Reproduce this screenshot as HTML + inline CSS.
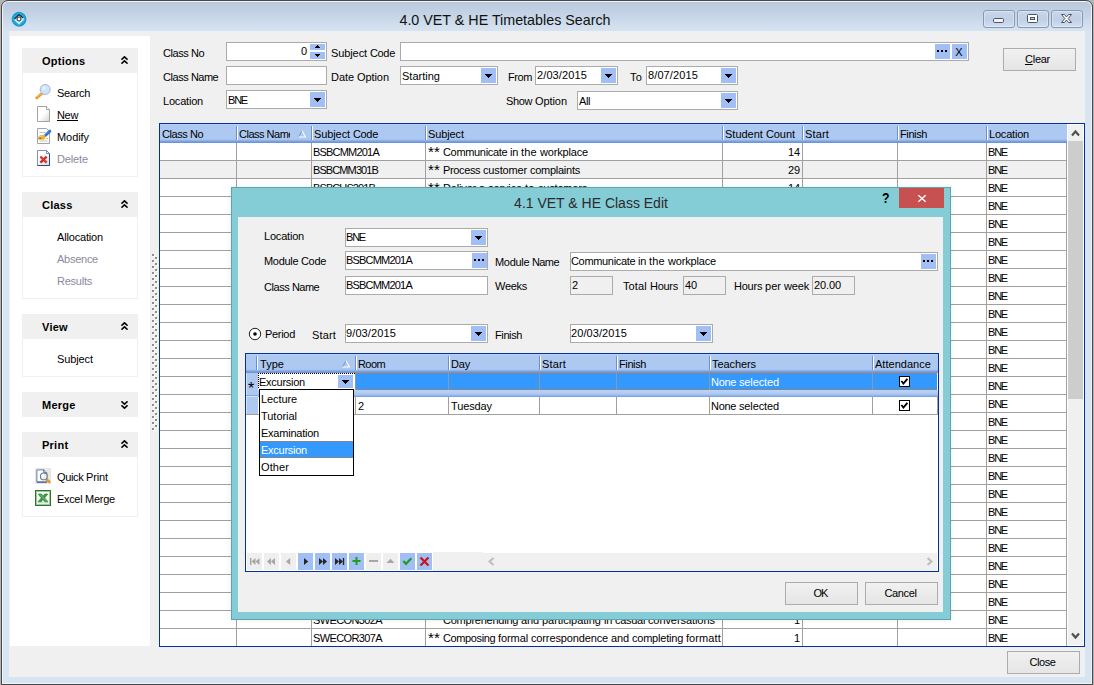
<!DOCTYPE html><html><head><meta charset="utf-8"><title>4.0 VET &amp; HE Timetables Search</title><style>
*{box-sizing:border-box;margin:0;padding:0}
html,body{width:1094px;height:685px;overflow:hidden;background:#b4b4b4}
body{font-family:"Liberation Sans",sans-serif;font-size:11px;letter-spacing:-0.2px;color:#000;position:relative}
.a{position:absolute}
.t{position:absolute;white-space:nowrap;line-height:13px;height:13px}
.g{color:#8a8a9c}
u{text-decoration:underline;text-underline-offset:1px}
#win{left:1px;top:0;width:1092px;height:685px;border:1px solid #474747;border-radius:7px 7px 0 0;background:linear-gradient(#b8c7da 0,#c3d2e4 12px,#d2e0ef 26px,#d7e4f2 31px,#d7e4f2 100%);box-shadow:inset 0 0 0 1px #eef4fb}
#client{left:9px;top:31px;width:1076px;height:646px;background:#f0f0f0}
#title{left:0;top:10px;width:1010px;text-align:center;font-size:14.3px;line-height:20px;height:20px;letter-spacing:0;color:#111}
.wb{position:absolute;top:10px;width:32px;height:18px;border:1px solid #8798b6;border-radius:3px;background:linear-gradient(#c9d7e9,#bfd0e5 50%,#d0deef);box-shadow:inset 0 0 0 1px rgba(255,255,255,.35)}
#lp{left:10px;top:36px;width:140px;height:610px;background:#fff}
.gh{position:absolute;left:22px;width:116px;height:25px;background:#f0f0f0}
.gh b{position:absolute;left:20px;top:7px;line-height:13px;letter-spacing:.25px;white-space:nowrap}
.gh svg{position:absolute;left:99px;top:8px}
.gb{position:absolute;left:22px;width:116px;border:1px solid #f0f0f0;border-top:none}
.inp{position:absolute;background:#fff;border:1px solid #ababab;height:19px}
.inp.ro{background:#f0f0f0}
.inp>span{position:absolute;left:2px;top:2px;line-height:13px;white-space:nowrap}
.dd{position:absolute;right:1px;top:1px;width:15px;height:15px;background:#a1bff4}
.dd:after{content:"";position:absolute;left:7px;top:6px;width:1px;height:1px;background:#000;box-shadow:-3px 0 #000,-2px 0 #000,-1px 0 #000,0 0 #000,1px 0 #000,2px 0 #000,3px 0 #000,-2px 1px #000,-1px 1px #000,0 1px #000,1px 1px #000,2px 1px #000,-1px 2px #000,0 2px #000,1px 2px #000,0 3px #000}
.el{position:absolute;top:1px;width:15px;height:15px;background:#a1bff4}
.el i{position:absolute;top:6px;width:2px;height:2px;background:#000}
.btn{position:absolute;height:23px;width:73px;padding-right:2px;border:1px solid #acacac;background:linear-gradient(#f1f1f1,#e5e5e5);text-align:center;line-height:21px}
#grid{left:159px;top:123px;width:926px;height:524px;border:1px solid #04309a;background:#fff}
.hl{position:absolute;left:160px;width:907px;height:1px;background:#a0a0a0}
.vl{position:absolute;top:143px;width:1px;height:503px;background:#a0a0a0}
.hc{position:absolute;height:19px;background:linear-gradient(#bad2f5 0,#bad2f5 1px,#adc9f1 1px,#adc9f1 15px,#9ebdec 16px,#86a9e3 17px,#6d96d8 18px,#6d96d8 19px)}
.hs{position:absolute;width:2px;background:linear-gradient(90deg,#6a8ed2 0,#6a8ed2 1px,#fff 1px,#fff 2px)}
#dlg{left:231px;top:187px;width:720px;height:433px;background:#84ccd6;border:1px solid #5fa3ad;box-shadow:0 0 5px rgba(0,0,0,.09)}
#dlgc{left:238px;top:217px;width:705px;height:395px;background:#f0f0f0}
#dtitle{left:231px;top:193px;width:720px;text-align:center;font-size:14px;line-height:20px;height:20px;letter-spacing:0;color:#2b2b2b}
#ig{left:245px;top:353px;width:694px;height:219px;border:1px solid #04309a;background:#fff}
.nb{position:absolute;top:553px;width:15px;height:17px}
.nb.on{background:#a1bff4}
.nb.off{background:#efefef}
.li{position:absolute;left:260px;width:94px;height:17px}
.li span{position:absolute;left:1px;top:2px;line-height:13px}
</style></head><body>
<div id="win" class="a"></div>
<div id="title" class="a">4.0 VET &amp; HE Timetables Search</div>
<svg class="a" style="left:11px;top:11px" width="17" height="17" viewBox="0 0 17 17"><circle cx="8.300" cy="8.500" r="6.900" fill="#3a4a58" opacity=".55"/><circle cx="8" cy="8.200" r="6.900" fill="#14a9e0" stroke="#0c8fc8" stroke-width=".8"/><path d="M8 2.600 13.600 8.200 8 13.800 2.400 8.200z" fill="#fff" opacity=".7"/><path d="M3.600 9 8 12.800 12.400 9z" fill="#fff" opacity=".35"/><path d="M3.300 8.200 7.900 3.600 11.900 6.800" fill="none" stroke="#111" stroke-width="1.100"/><circle cx="8" cy="8" r="2" fill="#fff" stroke="#111" stroke-width=".9"/></svg>
<div class="wb" style="left:983px"><svg width="29" height="16" viewBox="0 0 29 16"><rect x="9.500" y="7.500" width="10" height="4" rx="1.200" fill="#f4f4f4" stroke="#4a5468" stroke-width="1"/></svg></div>
<div class="wb" style="left:1017px"><svg width="29" height="16" viewBox="0 0 29 16"><rect x="9.5" y="3.5" width="10" height="8" rx="1" fill="#fff" stroke="#4a5468" stroke-width="1"/><rect x="12.5" y="6.5" width="4" height="2" fill="#c6d5e8" stroke="#4a5468" stroke-width="1"/></svg></div>
<div class="wb" style="left:1051px"><svg width="30" height="16" viewBox="0 0 30 16"><path d="M9.500 3.500h3L14.500 6l2-2.500h3L16.200 7.500l3.300 4h-3L14.500 9l-2 2.500h-3L12.800 7.500z" fill="#fff" stroke="#4a5468" stroke-width="1" stroke-linejoin="round"/></svg></div>
<div id="client" class="a"></div>
<div id="lp" class="a"></div>
<div class="gh" style="top:48px"><b>Options</b><svg width="7" height="8" viewBox="0 0 7 8"><path d="M.4 3.600 3.500 .8 6.600 3.600M.4 7.600 3.500 4.800 6.600 7.600" fill="none" stroke="#000" stroke-width="1.600"/></svg></div>
<div class="gb" style="top:73px;height:104px"></div>
<div class="gh" style="top:192px"><b>Class</b><svg width="7" height="8" viewBox="0 0 7 8"><path d="M.4 3.600 3.500 .8 6.600 3.600M.4 7.600 3.500 4.800 6.600 7.600" fill="none" stroke="#000" stroke-width="1.600"/></svg></div>
<div class="gb" style="top:217px;height:82px"></div>
<div class="gh" style="top:314px"><b>View</b><svg width="7" height="8" viewBox="0 0 7 8"><path d="M.4 3.600 3.500 .8 6.600 3.600M.4 7.600 3.500 4.800 6.600 7.600" fill="none" stroke="#000" stroke-width="1.600"/></svg></div>
<div class="gb" style="top:339px;height:38px"></div>
<div class="gh" style="top:392px"><b>Merge</b><svg style="top:9px" width="7" height="8" viewBox="0 0 7 8"><path d="M.4 .4 3.500 3.200 6.600 .4M.4 4.400 3.500 7.200 6.600 4.400" fill="none" stroke="#000" stroke-width="1.600"/></svg></div>
<div class="gh" style="top:432px"><b>Print</b><svg width="7" height="8" viewBox="0 0 7 8"><path d="M.4 3.600 3.500 .8 6.600 3.600M.4 7.600 3.500 4.800 6.600 7.600" fill="none" stroke="#000" stroke-width="1.600"/></svg></div>
<div class="gb" style="top:457px;height:60px"></div>
<span class="t " style="left:57px;top:87px;letter-spacing:-0.312px;">Search</span>
<span class="t " style="left:57px;top:109px;letter-spacing:-0.333px;"><u>New</u></span>
<span class="t " style="left:57px;top:131px;letter-spacing:-0.068px;">Modify</span>
<span class="t g" style="left:57px;top:153px;letter-spacing:-0.135px;">Delete</span>
<span class="t " style="left:57px;top:231px;letter-spacing:-0.172px;">Allocation</span>
<span class="t g" style="left:57px;top:253px;letter-spacing:-0.263px;">Absence</span>
<span class="t g" style="left:57px;top:275px;letter-spacing:-0.241px;">Results</span>
<span class="t " style="left:57px;top:353px;letter-spacing:-0.103px;">Subject</span>
<span class="t " style="left:57px;top:471px;"><span style="letter-spacing:-0.365px;">Quick </span><span style="letter-spacing:-0.125px;">Print</span></span>
<span class="t " style="left:57px;top:493px;"><span style="letter-spacing:-0.328px;">Excel </span><span style="letter-spacing:-0.237px;">Merge</span></span>
<svg class="a" style="left:35px;top:83px" width="17" height="17" viewBox="0 0 17 17"><path d="M7.200 10.300 1.700 15" stroke="#f0921e" stroke-width="2.600" stroke-linecap="round"/><path d="M7.600 10 1.900 14.600" stroke="#f8b860" stroke-width="1"/><circle cx="10.200" cy="6.500" r="5" fill="#c9e8f5" stroke="#b3abe2" stroke-width="1"/><circle cx="9.200" cy="5.300" r="1.800" fill="#e3f4fb"/></svg>
<svg width="0" height="0" style="position:absolute"><defs><linearGradient id="dg" x1="0" y1="0" x2="1" y2="1"><stop offset=".5" stop-color="#fff"/><stop offset="1" stop-color="#d4d4d4"/></linearGradient></defs></svg>
<svg class="a" style="left:37px;top:106px" width="13" height="16" viewBox="0 0 13 16"><path d="M.5 .5h9l3 3v12h-12z" fill="url(#dg)" stroke="#a3a3a3"/><path d="M9.500 .5v3h3" fill="#fff" stroke="#a3a3a3"/></svg>
<svg class="a" style="left:37px;top:128px" width="15" height="16" viewBox="0 0 15 16"><path d="M.5 .5h9l3 3v12h-12z" fill="#fff" stroke="#a3a3a3"/><path d="M2.500 4.500h6M2.500 7.500h4M9 10.500h2M2.500 13h8" stroke="#c4c4c4" stroke-width="1"/><path d="M12.800 3.200 8.300 7.500" stroke="#2a6fd6" stroke-width="3" stroke-linecap="round"/><path d="M12.400 2.300 7.800 6.700" stroke="#7fb0f0" stroke-width=".8"/><path d="M8.700 8.200 7 6.400 5.200 8.300 1.200 8.500v3.200h5.800l1.200-1.600z" fill="#f7b21a"/><path d="M2.300 10.200h2" stroke="#3a66c4" stroke-width="1.200"/></svg>
<svg class="a" style="left:37px;top:150px" width="13" height="16" viewBox="0 0 13 16"><defs><linearGradient id="dg2" x1="0" y1="0" x2="1" y2="1"><stop offset=".3" stop-color="#fff"/><stop offset="1" stop-color="#d3deee"/></linearGradient></defs><path d="M.5 .5h9l3 3v12h-12z" fill="url(#dg2)" stroke="#7d93ba"/><path d="M.5 15.500h12v-12" fill="none" stroke="#2d4b7e"/><path d="M9.500 .5v3h3z" fill="#fff" stroke="#5a76a6" stroke-width=".8"/><path d="M3.400 6.600 9.600 12.600M9.600 6.600 3.400 12.600" stroke="#cf2a1e" stroke-width="2.300"/><path d="M3.400 6.600 9.600 12.600" stroke="#e8685c" stroke-width=".7"/></svg>
<svg class="a" style="left:35px;top:468px" width="16" height="16" viewBox="0 0 16 16"><rect width="16" height="16" fill="#e9e7e4"/><path d="M1.900 1.900h7l3 3v9.200h-10z" fill="#fff" stroke="#5f80bd"/><path d="M1.900 14.100h10" stroke="#34507f"/><path d="M8.900 1.900v3h3" fill="#fff" stroke="#34507f"/><path d="M11.300 11.200 14.300 13.800" stroke="#e8952a" stroke-width="2.600" stroke-linecap="round"/><circle cx="8.800" cy="8.400" r="3.400" fill="#e4eef8" stroke="#777b82" stroke-width="1.100"/><circle cx="8" cy="7.600" r="1.300" fill="#fff"/></svg>
<svg class="a" style="left:35px;top:490px" width="16" height="16" viewBox="0 0 16 16"><rect x=".5" y=".5" width="15" height="15" fill="#f4f9f2" stroke="#2f6f2f"/><rect x="1.500" y="1.500" width="13" height="13" fill="none" stroke="#9ccc99"/><path d="M2.500 12.800h11" stroke="#cfe6cc" stroke-width="1.400"/><path d="M3.200 4h3.400L8 6.300 9.600 4h3.200L9.700 7.900l3.300 3.900H9.600L8 9.500l-1.600 2.300H3l3.300-3.900z" fill="#3a9a46" stroke="#236b2c" stroke-width=".5"/><path d="M4.600 4.600 11 11.200M5.600 4.600l5.800 6.200" stroke="#7cc486" stroke-width=".5"/></svg>
<svg class="a" style="left:152px;top:254px" width="6" height="178" viewBox="0 0 6 178"><rect x="1" y="1" width="2" height="2" fill="#fff"/><rect x="0" y="0" width="2" height="2" fill="#8c8c8c"/><rect x="4" y="4" width="2" height="2" fill="#fff"/><rect x="3" y="3" width="2" height="2" fill="#8c8c8c"/><rect x="1" y="7" width="2" height="2" fill="#fff"/><rect x="0" y="6" width="2" height="2" fill="#8c8c8c"/><rect x="4" y="10" width="2" height="2" fill="#fff"/><rect x="3" y="9" width="2" height="2" fill="#8c8c8c"/><rect x="1" y="13" width="2" height="2" fill="#fff"/><rect x="0" y="12" width="2" height="2" fill="#8c8c8c"/><rect x="4" y="16" width="2" height="2" fill="#fff"/><rect x="3" y="15" width="2" height="2" fill="#8c8c8c"/><rect x="1" y="19" width="2" height="2" fill="#fff"/><rect x="0" y="18" width="2" height="2" fill="#8c8c8c"/><rect x="4" y="22" width="2" height="2" fill="#fff"/><rect x="3" y="21" width="2" height="2" fill="#8c8c8c"/><rect x="1" y="25" width="2" height="2" fill="#fff"/><rect x="0" y="24" width="2" height="2" fill="#8c8c8c"/><rect x="4" y="28" width="2" height="2" fill="#fff"/><rect x="3" y="27" width="2" height="2" fill="#8c8c8c"/><rect x="1" y="31" width="2" height="2" fill="#fff"/><rect x="0" y="30" width="2" height="2" fill="#8c8c8c"/><rect x="4" y="34" width="2" height="2" fill="#fff"/><rect x="3" y="33" width="2" height="2" fill="#8c8c8c"/><rect x="1" y="37" width="2" height="2" fill="#fff"/><rect x="0" y="36" width="2" height="2" fill="#8c8c8c"/><rect x="4" y="40" width="2" height="2" fill="#fff"/><rect x="3" y="39" width="2" height="2" fill="#8c8c8c"/><rect x="1" y="43" width="2" height="2" fill="#fff"/><rect x="0" y="42" width="2" height="2" fill="#8c8c8c"/><rect x="4" y="46" width="2" height="2" fill="#fff"/><rect x="3" y="45" width="2" height="2" fill="#8c8c8c"/><rect x="1" y="49" width="2" height="2" fill="#fff"/><rect x="0" y="48" width="2" height="2" fill="#8c8c8c"/><rect x="4" y="52" width="2" height="2" fill="#fff"/><rect x="3" y="51" width="2" height="2" fill="#8c8c8c"/><rect x="1" y="55" width="2" height="2" fill="#fff"/><rect x="0" y="54" width="2" height="2" fill="#8c8c8c"/><rect x="4" y="58" width="2" height="2" fill="#fff"/><rect x="3" y="57" width="2" height="2" fill="#8c8c8c"/><rect x="1" y="61" width="2" height="2" fill="#fff"/><rect x="0" y="60" width="2" height="2" fill="#8c8c8c"/><rect x="4" y="64" width="2" height="2" fill="#fff"/><rect x="3" y="63" width="2" height="2" fill="#8c8c8c"/><rect x="1" y="67" width="2" height="2" fill="#fff"/><rect x="0" y="66" width="2" height="2" fill="#8c8c8c"/><rect x="4" y="70" width="2" height="2" fill="#fff"/><rect x="3" y="69" width="2" height="2" fill="#8c8c8c"/><rect x="1" y="73" width="2" height="2" fill="#fff"/><rect x="0" y="72" width="2" height="2" fill="#8c8c8c"/><rect x="4" y="76" width="2" height="2" fill="#fff"/><rect x="3" y="75" width="2" height="2" fill="#8c8c8c"/><rect x="1" y="79" width="2" height="2" fill="#fff"/><rect x="0" y="78" width="2" height="2" fill="#8c8c8c"/><rect x="4" y="82" width="2" height="2" fill="#fff"/><rect x="3" y="81" width="2" height="2" fill="#8c8c8c"/><rect x="1" y="85" width="2" height="2" fill="#fff"/><rect x="0" y="84" width="2" height="2" fill="#8c8c8c"/><rect x="4" y="88" width="2" height="2" fill="#fff"/><rect x="3" y="87" width="2" height="2" fill="#8c8c8c"/><rect x="1" y="91" width="2" height="2" fill="#fff"/><rect x="0" y="90" width="2" height="2" fill="#8c8c8c"/><rect x="4" y="94" width="2" height="2" fill="#fff"/><rect x="3" y="93" width="2" height="2" fill="#8c8c8c"/><rect x="1" y="97" width="2" height="2" fill="#fff"/><rect x="0" y="96" width="2" height="2" fill="#8c8c8c"/><rect x="4" y="100" width="2" height="2" fill="#fff"/><rect x="3" y="99" width="2" height="2" fill="#8c8c8c"/><rect x="1" y="103" width="2" height="2" fill="#fff"/><rect x="0" y="102" width="2" height="2" fill="#8c8c8c"/><rect x="4" y="106" width="2" height="2" fill="#fff"/><rect x="3" y="105" width="2" height="2" fill="#8c8c8c"/><rect x="1" y="109" width="2" height="2" fill="#fff"/><rect x="0" y="108" width="2" height="2" fill="#8c8c8c"/><rect x="4" y="112" width="2" height="2" fill="#fff"/><rect x="3" y="111" width="2" height="2" fill="#8c8c8c"/><rect x="1" y="115" width="2" height="2" fill="#fff"/><rect x="0" y="114" width="2" height="2" fill="#8c8c8c"/><rect x="4" y="118" width="2" height="2" fill="#fff"/><rect x="3" y="117" width="2" height="2" fill="#8c8c8c"/><rect x="1" y="121" width="2" height="2" fill="#fff"/><rect x="0" y="120" width="2" height="2" fill="#8c8c8c"/><rect x="4" y="124" width="2" height="2" fill="#fff"/><rect x="3" y="123" width="2" height="2" fill="#8c8c8c"/><rect x="1" y="127" width="2" height="2" fill="#fff"/><rect x="0" y="126" width="2" height="2" fill="#8c8c8c"/><rect x="4" y="130" width="2" height="2" fill="#fff"/><rect x="3" y="129" width="2" height="2" fill="#8c8c8c"/><rect x="1" y="133" width="2" height="2" fill="#fff"/><rect x="0" y="132" width="2" height="2" fill="#8c8c8c"/><rect x="4" y="136" width="2" height="2" fill="#fff"/><rect x="3" y="135" width="2" height="2" fill="#8c8c8c"/><rect x="1" y="139" width="2" height="2" fill="#fff"/><rect x="0" y="138" width="2" height="2" fill="#8c8c8c"/><rect x="4" y="142" width="2" height="2" fill="#fff"/><rect x="3" y="141" width="2" height="2" fill="#8c8c8c"/><rect x="1" y="145" width="2" height="2" fill="#fff"/><rect x="0" y="144" width="2" height="2" fill="#8c8c8c"/><rect x="4" y="148" width="2" height="2" fill="#fff"/><rect x="3" y="147" width="2" height="2" fill="#8c8c8c"/><rect x="1" y="151" width="2" height="2" fill="#fff"/><rect x="0" y="150" width="2" height="2" fill="#8c8c8c"/><rect x="4" y="154" width="2" height="2" fill="#fff"/><rect x="3" y="153" width="2" height="2" fill="#8c8c8c"/><rect x="1" y="157" width="2" height="2" fill="#fff"/><rect x="0" y="156" width="2" height="2" fill="#8c8c8c"/><rect x="4" y="160" width="2" height="2" fill="#fff"/><rect x="3" y="159" width="2" height="2" fill="#8c8c8c"/><rect x="1" y="163" width="2" height="2" fill="#fff"/><rect x="0" y="162" width="2" height="2" fill="#8c8c8c"/><rect x="4" y="166" width="2" height="2" fill="#fff"/><rect x="3" y="165" width="2" height="2" fill="#8c8c8c"/><rect x="1" y="169" width="2" height="2" fill="#fff"/><rect x="0" y="168" width="2" height="2" fill="#8c8c8c"/><rect x="4" y="172" width="2" height="2" fill="#fff"/><rect x="3" y="171" width="2" height="2" fill="#8c8c8c"/><rect x="1" y="175" width="2" height="2" fill="#fff"/><rect x="0" y="174" width="2" height="2" fill="#8c8c8c"/></svg>
<span class="t " style="left:163px;top:47px;"><span style="letter-spacing:-0.427px;">Class </span><span style="letter-spacing:-0.531px;">No</span></span>
<span class="t " style="left:163px;top:71px;"><span style="letter-spacing:-0.427px;">Class </span><span style="letter-spacing:-0.586px;">Name</span></span>
<span class="t " style="left:163px;top:95px;letter-spacing:-0.203px;">Location</span>
<span class="t " style="left:331px;top:47px;"><span style="letter-spacing:-0.098px;">Subject </span><span style="letter-spacing:-0.328px;">Code</span></span>
<span class="t " style="left:331px;top:71px;"><span style="letter-spacing:-0.062px;">Date </span><span style="letter-spacing:-0.073px;">Option</span></span>
<span class="t " style="left:508px;top:71px;letter-spacing:-0.414px;">From</span>
<span class="t " style="left:630px;top:71px;letter-spacing:0.188px;">To</span>
<span class="t " style="left:506px;top:95px;"><span style="letter-spacing:-0.319px;">Show </span><span style="letter-spacing:-0.073px;">Option</span></span>
<div class="inp" style="left:226px;top:42px;width:101px"><span style="left:auto;right:19px">0</span><div class="a" style="right:1px;top:1px;width:15px;height:6px;background:#a1bff4"><svg class="a" style="left:5px;top:1px" width="5" height="3" shape-rendering="crispEdges"><path d="M2 0h1v1h1v1h1v1h-5v-1h1v-1h1z"/></svg></div><div class="a" style="right:1px;top:9px;width:15px;height:7px;background:#a1bff4"><svg class="a" style="left:5px;top:2px" width="5" height="3" shape-rendering="crispEdges"><path d="M0 0h5v1h-1v1h-1v1h-1v-1h-1v-1h-1z"/></svg></div></div>
<div class="inp" style="left:226px;top:66px;width:101px"></div>
<div class="inp" style="left:226px;top:90px;width:101px"><span style="left:1px;top:3px;letter-spacing:-1.208px;">BNE</span><div class="dd"></div></div>
<div class="inp" style="left:400px;top:42px;width:569px"><div class="el" style="left:534px"><i style="left:2px"></i><i style="left:6px"></i><i style="left:10px"></i></div><div class="el" style="left:551px;text-align:center;text-indent:-1px;line-height:16px;letter-spacing:0">X</div></div>
<div class="inp" style="left:400px;top:66px;width:98px"><span style="left:1px;top:3px;letter-spacing:0.008px;">Starting</span><div class="dd"></div></div>
<div class="inp" style="left:535px;top:66px;width:83px"><span style="left:1px;top:2px;letter-spacing:0.111px;">2/03/2015</span><div class="dd"></div></div>
<div class="inp" style="left:646px;top:66px;width:92px"><span style="left:1px;top:2px;letter-spacing:0.111px;">8/07/2015</span><div class="dd"></div></div>
<div class="inp" style="left:577px;top:91px;width:161px"><span style="left:1px;top:3px;letter-spacing:-0.406px;">All</span><div class="dd"></div></div>
<div class="btn" style="left:1003px;top:48px;padding-right:4px;letter-spacing:-0.256px;"><u>C</u>lear</div>
<div class="btn" style="left:1007px;top:651px;letter-spacing:-0.425px;">Close</div>
<div id="grid" class="a"></div>
<div class="hc" style="left:160px;top:124px;width:77px"></div>
<span class="t " style="left:162px;top:128px;"><span style="letter-spacing:-0.427px;">Class </span><span style="letter-spacing:-0.531px;">No</span></span>
<div class="hc" style="left:237px;top:124px;width:75px"></div>
<div class="hs" style="left:236px;top:126px;height:14px"></div>
<span class="t" style="left:239px;top:128px;width:51px;overflow:hidden;letter-spacing:-0.491px;">Class Name</span>
<svg class="a" style="left:298px;top:130px" width="8" height="8" viewBox="0 0 8 8"><path d="M.5 7 4 .8" fill="none" stroke="#7c9cd9" stroke-width="1.100"/><path d="M4 .8 7.500 7H.5" fill="none" stroke="#fff" stroke-width="1.100"/></svg>
<div class="hc" style="left:312px;top:124px;width:114px"></div>
<div class="hs" style="left:311px;top:126px;height:14px"></div>
<span class="t " style="left:314px;top:128px;"><span style="letter-spacing:-0.098px;">Subject </span><span style="letter-spacing:-0.328px;">Code</span></span>
<div class="hc" style="left:426px;top:124px;width:297px"></div>
<div class="hs" style="left:425px;top:126px;height:14px"></div>
<span class="t " style="left:428px;top:128px;letter-spacing:-0.103px;">Subject</span>
<div class="hc" style="left:723px;top:124px;width:80px"></div>
<div class="hs" style="left:722px;top:126px;height:14px"></div>
<span class="t " style="left:725px;top:128px;"><span style="letter-spacing:-0.004px;">Student </span><span style="letter-spacing:-0.075px;">Count</span></span>
<div class="hc" style="left:803px;top:124px;width:95px"></div>
<div class="hs" style="left:802px;top:126px;height:14px"></div>
<span class="t " style="left:805px;top:128px;letter-spacing:0.150px;">Start</span>
<div class="hc" style="left:898px;top:124px;width:89px"></div>
<div class="hs" style="left:897px;top:126px;height:14px"></div>
<span class="t " style="left:900px;top:128px;letter-spacing:-0.391px;">Finish</span>
<div class="hc" style="left:987px;top:124px;width:80px"></div>
<div class="hs" style="left:986px;top:126px;height:14px"></div>
<span class="t " style="left:989px;top:128px;letter-spacing:-0.203px;">Location</span>
<div class="a" style="left:1067px;top:124px;width:17px;height:522px;background:#fff"></div>
<div class="a" style="left:1068px;top:125px;width:15px;height:520px;background:#f0f0f0"></div>
<div class="a" style="left:1068px;top:141px;width:15px;height:258px;background:#cdcdcd"></div>
<svg class="a" style="left:1071px;top:129px" width="9" height="8" viewBox="0 0 9 8"><path d="M1 6.500 4.500 2.500 8 6.500" fill="none" stroke="#505050" stroke-width="2.200"/></svg>
<svg class="a" style="left:1071px;top:632px" width="9" height="8" viewBox="0 0 9 8"><path d="M1 1.500 4.500 5.500 8 1.500" fill="none" stroke="#505050" stroke-width="2.200"/></svg>
<div class="a" style="left:160px;top:161px;width:907px;height:17px;background:#f0f0f0"></div>
<div class="hl" style="top:160px"></div>
<div class="hl" style="top:178px"></div>
<div class="hl" style="top:196px"></div>
<div class="hl" style="top:214px"></div>
<div class="hl" style="top:232px"></div>
<div class="hl" style="top:250px"></div>
<div class="hl" style="top:268px"></div>
<div class="hl" style="top:286px"></div>
<div class="hl" style="top:304px"></div>
<div class="hl" style="top:322px"></div>
<div class="hl" style="top:340px"></div>
<div class="hl" style="top:358px"></div>
<div class="hl" style="top:376px"></div>
<div class="hl" style="top:394px"></div>
<div class="hl" style="top:412px"></div>
<div class="hl" style="top:430px"></div>
<div class="hl" style="top:448px"></div>
<div class="hl" style="top:466px"></div>
<div class="hl" style="top:484px"></div>
<div class="hl" style="top:502px"></div>
<div class="hl" style="top:520px"></div>
<div class="hl" style="top:538px"></div>
<div class="hl" style="top:556px"></div>
<div class="hl" style="top:574px"></div>
<div class="hl" style="top:592px"></div>
<div class="hl" style="top:610px"></div>
<div class="hl" style="top:628px"></div>
<div class="vl" style="left:236px"></div>
<div class="vl" style="left:311px"></div>
<div class="vl" style="left:425px"></div>
<div class="vl" style="left:722px"></div>
<div class="vl" style="left:802px"></div>
<div class="vl" style="left:897px"></div>
<div class="vl" style="left:986px"></div>
<div class="vl" style="left:1066px"></div>
<span class="t " style="left:988px;top:146px;letter-spacing:-1.208px;">BNE</span>
<span class="t " style="left:313px;top:146px;letter-spacing:-0.800px;">BSBCMM201A</span>
<span class="t" style="left:428px;top:146px;width:293px;overflow:hidden"><span style="display:inline-block;width:15px;height:13px;vertical-align:top;letter-spacing:.2px"><span style="font-size:15px;line-height:13px;position:relative;top:-1px">**</span> </span><span style="letter-spacing:-0.328px;">Communicate </span><span style="letter-spacing:-0.208px;">in </span><span style="letter-spacing:0.156px;">the </span><span style="letter-spacing:-0.170px;">workplace</span></span>
<span class="t" style="left:740px;top:146px;width:60px;text-align:right;letter-spacing:-0.125px;">14</span>
<span class="t " style="left:988px;top:164px;letter-spacing:-1.208px;">BNE</span>
<span class="t " style="left:313px;top:164px;letter-spacing:-0.900px;">BSBCMM301B</span>
<span class="t" style="left:428px;top:164px;width:293px;overflow:hidden"><span style="display:inline-block;width:15px;height:13px;vertical-align:top;letter-spacing:.2px"><span style="font-size:15px;line-height:13px;position:relative;top:-1px">**</span> </span><span style="letter-spacing:-0.352px;">Process </span><span style="letter-spacing:-0.146px;">customer </span><span style="letter-spacing:-0.259px;">complaints</span></span>
<span class="t" style="left:740px;top:164px;width:60px;text-align:right;letter-spacing:-0.125px;">29</span>
<span class="t " style="left:988px;top:182px;letter-spacing:-1.208px;">BNE</span>
<span class="t " style="left:313px;top:182px;letter-spacing:-0.897px;">BSBCUS201B</span>
<span class="t" style="left:428px;top:182px;width:293px;overflow:hidden"><span style="display:inline-block;width:15px;height:13px;vertical-align:top;letter-spacing:.2px"><span style="font-size:15px;line-height:13px;position:relative;top:-1px">**</span> </span><span style="letter-spacing:-0.160px;">Deliver </span><span style="letter-spacing:-0.094px;">a </span><span style="letter-spacing:-0.113px;">service </span><span style="letter-spacing:0.250px;">to </span><span style="letter-spacing:-0.194px;">customers</span></span>
<span class="t" style="left:740px;top:182px;width:60px;text-align:right;letter-spacing:-0.125px;">14</span>
<span class="t " style="left:988px;top:200px;letter-spacing:-1.208px;">BNE</span>
<span class="t " style="left:988px;top:218px;letter-spacing:-1.208px;">BNE</span>
<span class="t " style="left:988px;top:236px;letter-spacing:-1.208px;">BNE</span>
<span class="t " style="left:988px;top:254px;letter-spacing:-1.208px;">BNE</span>
<span class="t " style="left:988px;top:272px;letter-spacing:-1.208px;">BNE</span>
<span class="t " style="left:988px;top:290px;letter-spacing:-1.208px;">BNE</span>
<span class="t " style="left:988px;top:308px;letter-spacing:-1.208px;">BNE</span>
<span class="t " style="left:988px;top:326px;letter-spacing:-1.208px;">BNE</span>
<span class="t " style="left:988px;top:344px;letter-spacing:-1.208px;">BNE</span>
<span class="t " style="left:988px;top:362px;letter-spacing:-1.208px;">BNE</span>
<span class="t " style="left:988px;top:380px;letter-spacing:-1.208px;">BNE</span>
<span class="t " style="left:988px;top:398px;letter-spacing:-1.208px;">BNE</span>
<span class="t " style="left:988px;top:416px;letter-spacing:-1.208px;">BNE</span>
<span class="t " style="left:988px;top:434px;letter-spacing:-1.208px;">BNE</span>
<span class="t " style="left:988px;top:452px;letter-spacing:-1.208px;">BNE</span>
<span class="t " style="left:988px;top:470px;letter-spacing:-1.208px;">BNE</span>
<span class="t " style="left:988px;top:488px;letter-spacing:-1.208px;">BNE</span>
<span class="t " style="left:988px;top:506px;letter-spacing:-1.208px;">BNE</span>
<span class="t " style="left:988px;top:524px;letter-spacing:-1.208px;">BNE</span>
<span class="t " style="left:988px;top:542px;letter-spacing:-1.208px;">BNE</span>
<span class="t " style="left:988px;top:560px;letter-spacing:-1.208px;">BNE</span>
<span class="t " style="left:988px;top:578px;letter-spacing:-1.208px;">BNE</span>
<span class="t " style="left:988px;top:596px;letter-spacing:-1.208px;">BNE</span>
<span class="t " style="left:988px;top:614px;letter-spacing:-1.208px;">BNE</span>
<span class="t " style="left:313px;top:614px;letter-spacing:-0.622px;">SWECON302A</span>
<span class="t" style="left:428px;top:614px;width:293px;overflow:hidden"><span style="display:inline-block;width:15px;height:13px;vertical-align:top;letter-spacing:.2px"><span style="font-size:15px;line-height:13px;position:relative;top:-1px">**</span> </span><span style="letter-spacing:-0.241px;">Comprehending </span><span style="letter-spacing:-0.109px;">and </span><span style="letter-spacing:-0.029px;">participating </span><span style="letter-spacing:-0.208px;">in </span><span style="letter-spacing:-0.268px;">casual </span><span style="letter-spacing:-0.070px;">conversations</span></span>
<span class="t" style="left:740px;top:614px;width:60px;text-align:right;letter-spacing:-0.125px;">1</span>
<span class="t " style="left:988px;top:632px;letter-spacing:-1.208px;">BNE</span>
<span class="t " style="left:313px;top:632px;letter-spacing:-0.622px;">SWECOR307A</span>
<span class="t" style="left:428px;top:632px;width:293px;overflow:hidden"><span style="display:inline-block;width:15px;height:13px;vertical-align:top;letter-spacing:.2px"><span style="font-size:15px;line-height:13px;position:relative;top:-1px">**</span> </span><span style="letter-spacing:-0.372px;">Composing </span><span style="letter-spacing:-0.089px;">formal </span><span style="letter-spacing:-0.133px;">correspondence </span><span style="letter-spacing:-0.109px;">and </span><span style="letter-spacing:-0.207px;">completing </span><span style="letter-spacing:0.106px;">formatting</span></span>
<span class="t" style="left:740px;top:632px;width:60px;text-align:right;letter-spacing:-0.125px;">1</span>
<div id="dlg" class="a"></div>
<div id="dtitle" class="a">4.1 VET &amp; HE Class Edit</div>
<div class="a" style="left:899px;top:188px;width:45px;height:20px;background:#c75050"><svg class="a" style="left:18px;top:6px" width="10" height="9" viewBox="0 0 10 9"><path d="M1.350 1.350 8.650 7.850M8.650 1.350 1.350 7.850" stroke="#fff" stroke-width="1.400"/></svg></div>
<span class="t" style="left:881.500px;top:192px;font-weight:bold;font-size:14.500px;transform:scaleX(.85);transform-origin:0 0;letter-spacing:0">?</span>
<div id="dlgc" class="a"></div>
<span class="t " style="left:264px;top:230px;letter-spacing:-0.203px;">Location</span>
<span class="t " style="left:264px;top:255px;"><span style="letter-spacing:-0.308px;">Module </span><span style="letter-spacing:-0.328px;">Code</span></span>
<span class="t " style="left:264px;top:281px;"><span style="letter-spacing:-0.427px;">Class </span><span style="letter-spacing:-0.586px;">Name</span></span>
<span class="t " style="left:495px;top:256px;"><span style="letter-spacing:-0.308px;">Module </span><span style="letter-spacing:-0.586px;">Name</span></span>
<span class="t " style="left:495px;top:280px;letter-spacing:-0.284px;">Weeks</span>
<span class="t " style="left:623px;top:280px;"><span style="letter-spacing:0.115px;">Total </span><span style="letter-spacing:-0.269px;">Hours</span></span>
<span class="t " style="left:734px;top:280px;"><span style="letter-spacing:-0.234px;">Hours </span><span style="letter-spacing:0.008px;">per </span><span style="letter-spacing:-0.172px;">week</span></span>
<div class="inp" style="left:345px;top:228px;width:143px"><span style="left:0px;top:2px;letter-spacing:-1.208px;">BNE</span><div class="dd"></div></div>
<div class="inp" style="left:345px;top:251px;width:143px"><span style="left:0px;top:2px;letter-spacing:-0.800px;">BSBCMM201A</span><div class="el" style="left:126px"><i style="left:2px"></i><i style="left:6px"></i><i style="left:10px"></i></div></div>
<div class="inp" style="left:345px;top:276px;width:143px"><span style="left:0px;top:2px;letter-spacing:-0.800px;">BSBCMM201A</span></div>
<div class="inp" style="left:570px;top:252px;width:368px"><span style="left:0px;top:2px"><span style="letter-spacing:-0.328px;">Communicate </span><span style="letter-spacing:-0.208px;">in </span><span style="letter-spacing:0.156px;">the </span><span style="letter-spacing:-0.170px;">workplace</span></span><div class="el" style="left:350px"><i style="left:2px"></i><i style="left:6px"></i><i style="left:10px"></i></div></div>
<div class="inp ro" style="left:570px;top:276px;width:43px"><span style="left:1px;top:2px;letter-spacing:-0.125px;">2</span></div>
<div class="inp ro" style="left:683px;top:276px;width:43px"><span style="left:1px;top:2px;letter-spacing:-0.125px;">40</span></div>
<div class="inp ro" style="left:812px;top:276px;width:43px"><span style="left:1px;top:2px;letter-spacing:-0.113px;">20.00</span></div>
<svg class="a" style="left:248px;top:327px" width="14" height="14" viewBox="0 0 14 14"><circle cx="7" cy="7" r="5.700" fill="#fff" stroke="#222" stroke-width="1"/><circle cx="7" cy="7" r="1.800" fill="#000"/></svg>
<span class="t " style="left:265px;top:328px;letter-spacing:-0.302px;">Period</span>
<span class="t " style="left:312px;top:329px;letter-spacing:0.150px;">Start</span>
<span class="t " style="left:495px;top:329px;letter-spacing:-0.391px;">Finish</span>
<div class="inp" style="left:345px;top:324px;width:143px"><span style="left:0px;top:2px;letter-spacing:0.111px;">9/03/2015</span><div class="dd"></div></div>
<div class="inp" style="left:570px;top:324px;width:143px"><span style="left:0px;top:2px;letter-spacing:0.087px;">20/03/2015</span><div class="dd"></div></div>
<div id="ig" class="a"></div>
<div class="hc" style="left:246px;top:354px;width:11px"></div>
<div class="hc" style="left:257px;top:354px;width:99px"></div>
<div class="hs" style="left:256px;top:356px;height:14px"></div>
<span class="t " style="left:260px;top:358px;letter-spacing:0.035px;">Type</span>
<div class="hc" style="left:356px;top:354px;width:93px"></div>
<div class="hs" style="left:355px;top:356px;height:14px"></div>
<span class="t " style="left:358px;top:358px;letter-spacing:-0.586px;">Room</span>
<div class="hc" style="left:449px;top:354px;width:91px"></div>
<div class="hs" style="left:448px;top:356px;height:14px"></div>
<span class="t " style="left:451px;top:358px;letter-spacing:-0.188px;">Day</span>
<div class="hc" style="left:540px;top:354px;width:77px"></div>
<div class="hs" style="left:539px;top:356px;height:14px"></div>
<span class="t " style="left:542px;top:358px;letter-spacing:0.150px;">Start</span>
<div class="hc" style="left:617px;top:354px;width:93px"></div>
<div class="hs" style="left:616px;top:356px;height:14px"></div>
<span class="t " style="left:619px;top:358px;letter-spacing:-0.391px;">Finish</span>
<div class="hc" style="left:710px;top:354px;width:163px"></div>
<div class="hs" style="left:709px;top:356px;height:14px"></div>
<span class="t " style="left:712px;top:358px;letter-spacing:-0.082px;">Teachers</span>
<div class="hc" style="left:873px;top:354px;width:65px"></div>
<div class="hs" style="left:872px;top:356px;height:14px"></div>
<span class="t " style="left:875px;top:358px;letter-spacing:0.028px;">Attendance</span>
<svg class="a" style="left:342px;top:360px" width="8" height="8" viewBox="0 0 8 8"><path d="M.5 7 4 .8" fill="none" stroke="#7c9cd9" stroke-width="1.100"/><path d="M4 .8 7.500 7H.5" fill="none" stroke="#fff" stroke-width="1.100"/></svg>
<div class="a" style="left:246px;top:373px;width:12px;height:41px;background:#adc9f1;box-shadow:inset 1px 0 0 #d3e2f9"></div>
<div class="a" style="left:246px;top:395px;width:12px;height:1px;background:#86a8e2"></div>
<div class="a" style="left:246px;top:396px;width:12px;height:1px;background:#d3e2f9"></div>
<div class="a" style="left:258px;top:373px;width:679px;height:17px;background:#3399ff"></div>
<div class="a" style="left:258px;top:373px;width:679px;height:1px;background-image:repeating-linear-gradient(90deg,#d9730b 0,#d9730b 1px,transparent 1px,transparent 2px)"></div>
<div class="a" style="left:258px;top:389px;width:679px;height:1px;background-image:repeating-linear-gradient(90deg,#d9730b 0,#d9730b 1px,transparent 1px,transparent 2px)"></div>
<div class="a" style="left:258px;top:390px;width:680px;height:7px;background:linear-gradient(#bcd3f6 0,#adc9f1 4px,#8fb0e8 6px,#6f96da 7px)"></div>
<div class="a" style="left:246px;top:414px;width:692px;height:1px;background:#a0a0a0"></div>
<div class="a" style="left:355px;top:373px;width:1px;height:17px;background:#8b99ad"></div>
<div class="a" style="left:355px;top:397px;width:1px;height:17px;background:#a0a0a0"></div>
<div class="a" style="left:448px;top:373px;width:1px;height:17px;background:#8b99ad"></div>
<div class="a" style="left:448px;top:397px;width:1px;height:17px;background:#a0a0a0"></div>
<div class="a" style="left:539px;top:373px;width:1px;height:17px;background:#8b99ad"></div>
<div class="a" style="left:539px;top:397px;width:1px;height:17px;background:#a0a0a0"></div>
<div class="a" style="left:616px;top:373px;width:1px;height:17px;background:#8b99ad"></div>
<div class="a" style="left:616px;top:397px;width:1px;height:17px;background:#a0a0a0"></div>
<div class="a" style="left:709px;top:373px;width:1px;height:17px;background:#8b99ad"></div>
<div class="a" style="left:709px;top:397px;width:1px;height:17px;background:#a0a0a0"></div>
<div class="a" style="left:872px;top:373px;width:1px;height:17px;background:#8b99ad"></div>
<div class="a" style="left:872px;top:397px;width:1px;height:17px;background:#a0a0a0"></div>
<div class="a" style="left:937px;top:397px;width:1px;height:17px;background:#a0a0a0"></div>
<span class="t" style="left:248px;top:381px;font-size:16px;line-height:16px;height:16px;letter-spacing:0">*</span>
<span class="t " style="left:711px;top:376px;color:#fff"><span style="letter-spacing:-0.275px;">None </span><span style="letter-spacing:-0.125px;">selected</span></span>
<span class="t " style="left:711px;top:400px;"><span style="letter-spacing:-0.275px;">None </span><span style="letter-spacing:-0.125px;">selected</span></span>
<span class="t " style="left:358px;top:400px;letter-spacing:-0.125px;">2</span>
<span class="t " style="left:451px;top:400px;letter-spacing:-0.116px;">Tuesday</span>
<svg class="a" style="left:899px;top:376px" width="11" height="11" viewBox="0 0 11 11"><rect x=".5" y=".5" width="10" height="10" fill="#fff" stroke="#000"/><path d="M2.400 5 4.400 7.600 8.400 2.800" fill="none" stroke="#000" stroke-width="1.900"/></svg>
<svg class="a" style="left:899px;top:400px" width="11" height="11" viewBox="0 0 11 11"><rect x=".5" y=".5" width="10" height="10" fill="#fff" stroke="#000"/><path d="M2.400 5 4.400 7.600 8.400 2.800" fill="none" stroke="#000" stroke-width="1.900"/></svg>
<div class="a" style="left:258px;top:373px;width:97px;height:17px;background:#fff"></div>
<div class="a" style="left:258px;top:373px;width:97px;height:1px;background-image:repeating-linear-gradient(90deg,#000 0,#000 1px,#fff 1px,#fff 2px)"></div>
<div class="a" style="left:258px;top:373px;width:1px;height:16px;background-image:repeating-linear-gradient(#000 0,#000 1px,#fff 1px,#fff 2px)"></div>
<span class="t " style="left:259px;top:376px;letter-spacing:-0.257px;">Excursion</span>
<div class="a" style="left:338px;top:375px;width:15px;height:13px;background:#a1bff4"><svg class="a" style="left:4px;top:5px" width="7" height="4" shape-rendering="crispEdges"><path d="M0 0h7v1h-1v1h-1v1h-1v1h-1v-1h-1v-1h-1v-1h-1z"/></svg></div>
<div class="a" style="left:259px;top:389px;width:95px;height:87px;background:#fff;border:1px solid #000"></div>
<span class="t " style="left:261px;top:393px;letter-spacing:-0.103px;">Lecture</span>
<span class="t " style="left:261px;top:410px;letter-spacing:-0.035px;">Tutorial</span>
<span class="t " style="left:261px;top:427px;letter-spacing:-0.233px;">Examination</span>
<div class="a" style="left:260px;top:441px;width:93px;height:17px;background:#3399ff"></div>
<div class="a" style="left:260px;top:441px;width:93px;height:1px;background-image:repeating-linear-gradient(90deg,#d9730b 0,#d9730b 1px,transparent 1px,transparent 2px)"></div>
<div class="a" style="left:260px;top:457px;width:93px;height:1px;background-image:repeating-linear-gradient(90deg,#d9730b 0,#d9730b 1px,transparent 1px,transparent 2px)"></div>
<span class="t " style="left:261px;top:444px;letter-spacing:-0.257px;color:#fff">Excursion</span>
<span class="t " style="left:261px;top:461px;letter-spacing:0.094px;">Other</span>
<div class="a" style="left:246px;top:552px;width:187px;height:19px;background:#fff"></div>
<div class="a" style="left:433px;top:552px;width:50px;height:19px;background:#f0f0f0"></div>
<div class="a" style="left:483px;top:553px;width:454px;height:18px;background:#f0f0f0"></div>
<div class="nb off" style="left:247px"><svg width="15" height="17" viewBox="0 0 15 17"><path d="M3 5h1.500v7H3z" fill="#a6a6a6"/><path d="M8.500 5v7l-4-3.500zM12.500 5v7l-4-3.500z" fill="#a6a6a6"/></svg></div>
<div class="nb off" style="left:264px"><svg width="15" height="17" viewBox="0 0 15 17"><path d="M7 5v7l-4-3.500zM11 5v7l-4-3.500z" fill="#a6a6a6"/></svg></div>
<div class="nb off" style="left:281px"><svg width="15" height="17" viewBox="0 0 15 17"><path d="M9.200 5v7l-4.200-3.500z" fill="#a6a6a6"/></svg></div>
<div class="nb on" style="left:298px"><svg width="15" height="17" viewBox="0 0 15 17"><path d="M6 5v7l4.200-3.500z" fill="#262626"/></svg></div>
<div class="nb on" style="left:315px"><svg width="15" height="17" viewBox="0 0 15 17"><path d="M4 5v7l4-3.500zM8 5v7l4-3.500z" fill="#262626"/></svg></div>
<div class="nb on" style="left:332px"><svg width="15" height="17" viewBox="0 0 15 17"><path d="M3 5v7l4-3.500zM7 5v7l4-3.500z" fill="#262626"/><path d="M10.800 5h1.400v7h-1.400z" fill="#262626"/></svg></div>
<div class="nb on" style="left:349px"><svg width="15" height="17" viewBox="0 0 15 17"><path d="M7.500 4v8M3.500 8h8" stroke="#1f9e1f" stroke-width="2"/></svg></div>
<div class="nb off" style="left:366px"><svg width="15" height="17" viewBox="0 0 15 17"><path d="M3 7h9v2H3z" fill="#a6a6a6"/></svg></div>
<div class="nb off" style="left:383px"><svg width="15" height="17" viewBox="0 0 15 17"><path d="M3.500 10h8l-4-4.200z" fill="#a6a6a6"/></svg></div>
<div class="nb on" style="left:400px"><svg width="15" height="17" viewBox="0 0 15 17"><path d="M3.300 8 6 10.800 11.300 5.200" fill="none" stroke="#1f9e1f" stroke-width="2.200"/></svg></div>
<div class="nb on" style="left:417px"><svg width="15" height="17" viewBox="0 0 15 17"><path d="M3.500 4.500 11.500 12.500M11.500 4.500 3.500 12.500" stroke="#c81414" stroke-width="2.200"/></svg></div>
<svg class="a" style="left:487px;top:557px" width="8" height="9" viewBox="0 0 8 9"><path d="M6.500 1 2.500 4.500 6.500 8" fill="none" stroke="#bcbcbc" stroke-width="2"/></svg>
<svg class="a" style="left:926px;top:557px" width="8" height="9" viewBox="0 0 8 9"><path d="M1.500 1 5.500 4.500 1.500 8" fill="none" stroke="#bcbcbc" stroke-width="2"/></svg>
<div class="btn" style="left:785px;top:582px;letter-spacing:-0.953px;">OK</div>
<div class="btn" style="left:865px;top:582px;letter-spacing:-0.375px;">Cancel</div>
</body></html>
